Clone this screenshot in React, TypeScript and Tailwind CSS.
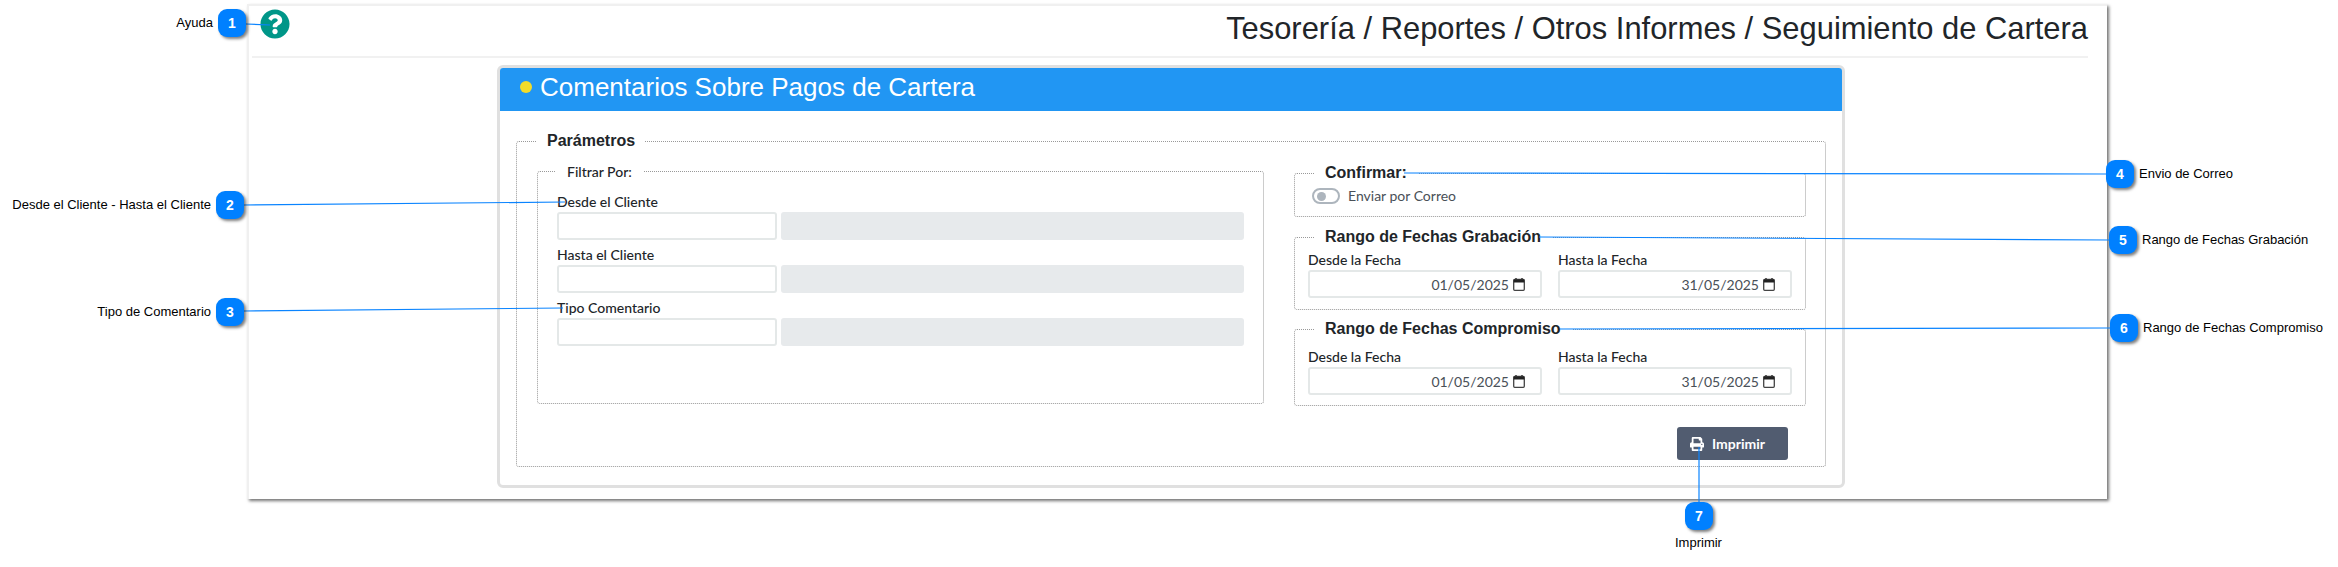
import { FaPrint, FaQuestionCircle } from "react-icons/fa";

const arial = "font-['Liberation_Sans',Arial,sans-serif]";
const lato = "font-['Lato','Liberation_Sans',sans-serif]";

// callouts that sit over the captured window
const callouts = [
  { n: 1, box: "left-[218px] top-[9px]", text: "Ayuda", textBox: "right-[2125px] top-[15px]" },
  { n: 2, box: "left-[216px] top-[191px]", text: "Desde el Cliente - Hasta el Cliente", textBox: "right-[2127px] top-[197px]" },
  { n: 3, box: "left-[216px] top-[298px]", text: "Tipo de Comentario", textBox: "right-[2127px] top-[304px]" },
  { n: 4, box: "left-[2106px] top-[160px]", text: "Envio de Correo", textBox: "left-[2139px] top-[166px]" },
  { n: 5, box: "left-[2109px] top-[226px]", text: "Rango de Fechas Grabación", textBox: "left-[2142px] top-[232px]" },
  { n: 6, box: "left-[2110px] top-[314px]", text: "Rango de Fechas Compromiso", textBox: "left-[2143px] top-[320px]" },
  { n: 7, box: "left-[1685px] top-[502px]", text: "Imprimir", textBox: "left-[1675px] top-[535px]" },
];

const lines = [
  [246, 24, 270, 25],
  [244, 205, 565, 202],
  [244, 311, 563, 308],
  [1404, 173, 2106, 174],
  [1539, 237, 2109, 240],
  [1560, 329, 2110, 328],
  [1699, 447, 1699, 502],
];

function ClientRow({ label }: { label: string }) {
  return (
    <div className="mb-[6px]">
      <label className={`${lato} block text-[14px] leading-[18px] font-medium text-[#212529]`}>{label}</label>
      <div className="mt-[1px] flex gap-[4px]">
        <input className="h-[28px] w-[220px] rounded-[3px] border-2 border-[#e4e8e8] bg-white" />
        <div className="h-[28px] w-[463px] rounded-[3px] bg-[#e7eaec]" />
      </div>
    </div>
  );
}

function CalendarIcon() {
  return (
    <svg width="12" height="13" viewBox="0 0 12 13" className="ml-[4px] shrink-0">
      <path d="M3 0v2M9 0v2" stroke="#222" strokeWidth="1.4" />
      <rect x="0.7" y="1.5" width="10.6" height="10.8" rx="1" fill="none" stroke="#444" strokeWidth="1.3" />
      <rect x="0.7" y="1.5" width="10.6" height="3" fill="#222" />
    </svg>
  );
}

function DateField({ label, value }: { label: string; value: string }) {
  return (
    <div className="w-[234px]">
      <label className={`${lato} block text-[14px] leading-[18px] font-medium text-[#212529]`}>{label}</label>
      <div className={`${lato} mt-[1px] flex h-[28px] items-center justify-end rounded-[3px] border-2 border-[#e4e8e8] pr-[15px] text-[14px] text-[#495057]`}>
        {value}
        <CalendarIcon />
      </div>
    </div>
  );
}

function DateRange({ title, className, bodyClass }: { title: string; className: string; bodyClass: string }) {
  return (
    <fieldset className={`rounded-[3px] border border-dotted border-[#999] ${className}`}>
      <legend className={`${arial} ml-[19px] px-[11px] text-[16px] leading-[16px] font-bold text-[#212529]`}>{title}</legend>
      <div className={`flex justify-between px-[13px] ${bodyClass}`}>
        <DateField label="Desde la Fecha" value="01/05/2025" />
        <DateField label="Hasta la Fecha" value="31/05/2025" />
      </div>
    </fieldset>
  );
}

export default function App() {
  return (
    <div className="relative h-[567px] w-[2338px] overflow-hidden bg-white">
      {/* captured window */}
      <div className="ml-[247px] mt-[4px] h-[495px] w-[1860px] border-t-2 border-l-2 border-t-[#f0f0f0] border-l-[#f0f0f0] bg-white px-[3px] shadow-[2px_2px_3px_rgba(0,0,0,0.55)]">
        <div className="mr-[16px] flex h-[52px] items-center justify-end border-b-2 border-[#f1f1f1] pb-[4px]">
          <h1 className={`${arial} text-[30.9px] leading-none text-[#212529]`}>
            Tesorería / Reportes / Otros Informes / Seguimiento de Cartera
          </h1>
        </div>

        {/* card */}
        <div className="ml-[245px] mt-[7px] h-[423px] w-[1348px] rounded-[6px] border-[3px] border-[#e0e0e0]">
          <div className="flex h-[43px] items-center rounded-t-[3px] bg-[#2196f3] pb-[5px] pl-[20px]">
            <span className="size-[12px] shrink-0 rounded-full bg-[#f2dc2a]" />
            <h2 className={`${arial} ml-[8px] text-[26px] leading-none text-white`}>Comentarios Sobre Pagos de Cartera</h2>
          </div>

          <fieldset className="ml-[16px] mt-[21px] h-[335px] w-[1310px] rounded-[3px] border border-dotted border-[#999] pl-[20px]">
            <legend className={`${arial} px-[10px] text-[16px] leading-[18px] font-bold text-[#212529]`}>Parámetros</legend>
            <div className="mt-[13px] flex items-start gap-[30px]">
              <fieldset className="h-[241px] w-[727px] rounded-[3px] border border-dotted border-[#999] pl-[19px]">
                <legend className={`${lato} ml-[-1px] px-[11px] text-[14px] leading-[17px] font-medium text-[#212529]`}>Filtrar Por:</legend>
                <div className="mt-[13px]">
                  <ClientRow label="Desde el Cliente" />
                  <ClientRow label="Hasta el Cliente" />
                  <ClientRow label="Tipo Comentario" />
                </div>
              </fieldset>

              <div className="w-[512px]">
                <fieldset className="mt-[2px] h-[52px] rounded-[3px] border border-dotted border-[#999]">
                  <legend className={`${arial} ml-[19px] px-[11px] text-[16px] leading-[16px] font-bold text-[#212529]`}>Confirmar:</legend>
                  <div className="flex items-center pl-[17px] pt-[7px]">
                    <span className="flex h-[16px] w-[28px] items-center rounded-full border-2 border-[#adb5bd] pl-[3px]">
                      <span className="size-[9px] rounded-full bg-[#adb5bd]" />
                    </span>
                    <span className={`${lato} ml-[8px] text-[14px] leading-[16px] text-[#495057]`}>Enviar por Correo</span>
                  </div>
                </fieldset>
                <DateRange title="Rango de Fechas Grabación" className="mt-[12px] h-[81px]" bodyClass="pt-[6px]" />
                <DateRange title="Rango de Fechas Compromiso" className="mt-[11px] h-[85px]" bodyClass="pt-[11px]" />
              </div>
            </div>
            <div className="mt-[21px] flex justify-end pr-[37px]">
              <button className={`${lato} flex h-[33px] w-[111px] items-center rounded-[3px] bg-[#515c70] pl-[13px] text-[14px] font-bold text-white`}>
                <FaPrint className="mr-[8px] size-[14px]" />
                Imprimir
              </button>
            </div>
          </fieldset>
        </div>
      </div>

      {/* help icon */}
      <FaQuestionCircle className="absolute left-[260px] top-[9px] size-[30px] text-[#009688]" />

      {/* connector lines */}
      <svg width="2338" height="567" className="pointer-events-none absolute left-0 top-0">
        {lines.map(([x1, y1, x2, y2], i) => (
          <line key={i} x1={x1} y1={y1} x2={x2} y2={y2} stroke="#0a84ff" strokeWidth="1.2" />
        ))}
      </svg>

      {callouts.map((c) => (
        <div key={c.n}>
          <div className={`${arial} absolute ${c.box} flex size-[28px] items-center justify-center rounded-[9px] bg-[#0080ff] text-[14px] font-bold text-white shadow-[2px_2px_3px_rgba(0,0,0,0.5)]`}>
            {c.n}
          </div>
          <span className={`${arial} absolute ${c.textBox} text-[13px] leading-[16px] whitespace-nowrap text-black`}>{c.text}</span>
        </div>
      ))}
    </div>
  );
}
